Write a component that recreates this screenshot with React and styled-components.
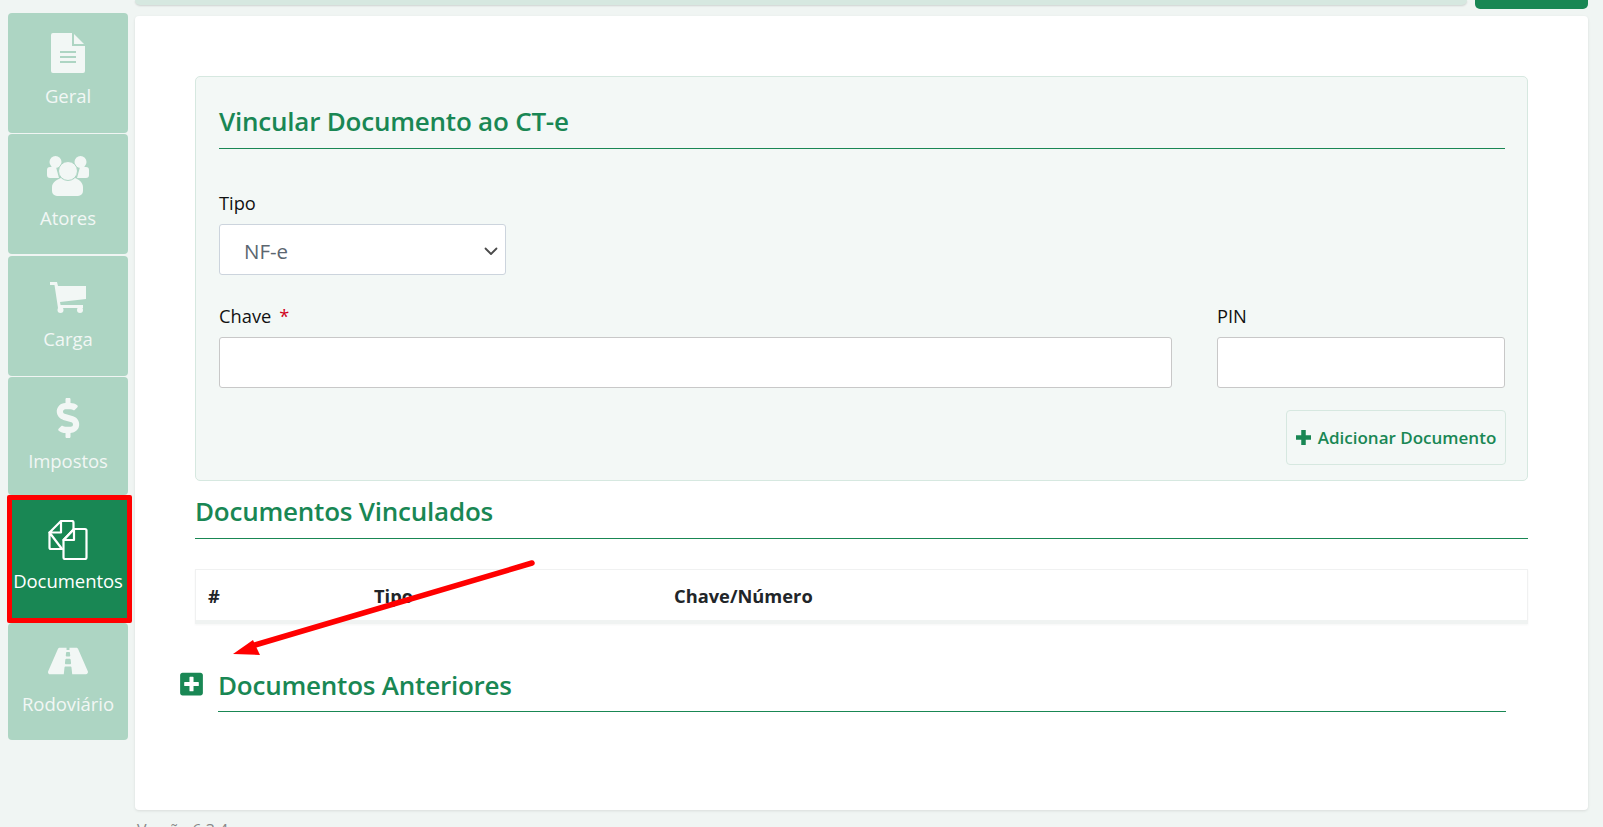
import React from 'react';
import styled, { createGlobalStyle } from 'styled-components';
import { FaDollarSign, FaRoad, FaPlusSquare } from 'react-icons/fa';

const GREEN = '#198754';
const FONT = '"Open Sans", "Noto Sans", "Liberation Sans", sans-serif';

const Global = createGlobalStyle`
  html, body { margin: 0; padding: 0; height: 827px; overflow: hidden; background: #f0f5f3; }
  body { font-family: ${FONT}; }
  * { box-sizing: border-box; }
`;

const Page = styled.div`
  position: relative;
  width: 1603px;
  height: 827px;
  overflow: hidden;
  display: flex;
  padding: 13px 15px 0 8px;
  gap: 7px;
  background: #f0f5f3;
`;

const Sidebar = styled.nav`
  width: 120px;
  flex: none;
  display: flex;
  flex-direction: column;
  gap: 1px;
`;

const Tab = styled.div`
  position: relative;
  z-index: ${p => (p.$active ? 1 : 0)};
  height: ${p => p.$h}px;
  margin: ${p => (p.$active ? '-1px 0' : `0 0 ${p.$mb || 0}px`)};
  flex: none;
  border-radius: 4px;
  background: ${p => (p.$active ? GREEN : '#add5c3')};
  color: ${p => (p.$active ? '#fff' : '#f2f7f5')};
  display: flex;
  flex-direction: column;
  align-items: center;
  padding-top: ${p => p.$pt}px;
`;

const ActiveOutline = styled.div`
  position: absolute;
  left: -1px;
  right: -4px;
  top: 0;
  bottom: 0;
  border: 5px solid #ff0000;
  border-radius: 2px;
  pointer-events: none;
`;

const IconSlot = styled.div`
  height: 44px;
  display: flex;
  align-items: center;
  justify-content: center;
`;

const TabLabel = styled.span`
  font-size: 18.5px;
  line-height: 24px;
  margin-top: ${p => p.$mt}px;
  letter-spacing: -0.05px;
  white-space: nowrap;
`;

const Main = styled.div`
  flex: 1;
  min-width: 0;
  display: flex;
  flex-direction: column;
  margin-top: -13px;
`;

const TopRow = styled.div`
  display: flex;
  gap: 8px;
  height: 16px;
  flex: none;
  align-items: flex-start;
`;

const TopBar = styled.div`
  flex: 1;
  height: 5px;
  background: #d6e8e0;
  border-radius: 0 0 5px 5px;
  box-shadow: 0 1px 2px rgba(0, 0, 0, 0.14);
`;

const TopButton = styled.div`
  width: 113px;
  height: 9px;
  background: ${GREEN};
  border-radius: 0 0 5px 5px;
`;

const Card = styled.main`
  height: 794px;
  flex: none;
  background: #fff;
  border-radius: 4px;
  box-shadow: 0 1px 3px rgba(0, 0, 0, 0.1);
  padding: 60px 60px 0 60px;
`;

const Panel = styled.section`
  height: 405px;
  background: #f3f8f6;
  border: 1px solid #d6e8e0;
  border-radius: 5px;
  padding: 23px 22px 0 23px;
`;

const Heading = styled.h2`
  margin: 0;
  font-size: 26px;
  line-height: 43px;
  height: ${p => p.$h || 49}px;
  font-weight: 600;
  color: ${GREEN};
  letter-spacing: -0.22px;
  border-bottom: 1px solid ${GREEN};
`;

const FieldRow = styled.div`
  display: flex;
  gap: 45px;
  margin-top: ${p => p.$mt}px;
`;

const Field = styled.div`
  width: ${p => p.$w};
  flex: ${p => (p.$grow ? 1 : 'none')};
`;

const Label = styled.label`
  display: block;
  font-size: 18.3px;
  line-height: 24px;
  color: #111;
  margin-bottom: 9px;
`;

const Req = styled.span`
  color: #d0021b;
  margin-left: 8px;
`;

const SelectBox = styled.div`
  height: 51px;
  border: 1px solid #ccd4dd;
  border-radius: 3px;
  background: #fff;
  display: flex;
  align-items: center;
  justify-content: space-between;
  padding: 3px 7px 0 24px;
  font-size: 20.5px;
  color: #5c6670;
`;

const TextBox = styled.div`
  height: 51px;
  border: 1px solid #c8c8c8;
  border-radius: 3px;
  background: #fff;
`;

const Actions = styled.div`
  display: flex;
  justify-content: flex-end;
  margin: 22px -1px 0 0;
`;

const AddButton = styled.button`
  width: 220px;
  height: 55px;
  border: 1px solid #d6e8e0;
  border-radius: 4px;
  background: #f3f8f6;
  color: ${GREEN};
  font-family: ${FONT};
  font-size: 17px;
  font-weight: 600;
  letter-spacing: 0;
  display: flex;
  align-items: center;
  justify-content: center;
  gap: 7px;
  padding: 0;
`;

const Section = styled.section`
  margin-top: ${p => p.$mt}px;
`;

const TableHead = styled.div`
  margin-top: 30px;
  height: 55px;
  border: 1px solid #f0f1f1;
  border-bottom: 4px solid #f0f3f2;
  box-shadow: 0 1px 2px rgba(0, 0, 0, 0.04);
  display: grid;
  grid-template-columns: 166px 300px 1fr;
  align-items: center;
  padding-left: 12px;
  font-size: 18.3px;
  font-weight: 700;
  color: #212529;
`;

const Collapse = styled.div`
  margin-top: 40px;
  margin-left: -15px;
  margin-right: 22px;
  display: flex;
  gap: 15px;
`;

const ToggleIcon = styled.span`
  color: ${GREEN};
  font-size: 26px;
  line-height: 0;
  margin-top: 7px;
  flex: none;
  width: 23px;
  display: flex;
  justify-content: center;
`;

const CollapseBody = styled.div`
  flex: 1;
`;

const Version = styled.div`
  margin: 9px 0 0 2px;
  font-size: 16px;
  line-height: 22px;
  color: #888;
`;

const Arrow = styled.svg`
  position: absolute;
  left: 0;
  top: 0;
  z-index: 2;
  pointer-events: none;
`;

const FileIcon = () => (
  <svg width="34" height="40" viewBox="0 0 34 40">
    <path fill="#f2f7f5" d="M2 0h19v13h13v25a2 2 0 0 1-2 2H2a2 2 0 0 1-2-2V2a2 2 0 0 1 2-2z" />
    <path fill="#f2f7f5" d="M23 1l10 10H23z" />
    <path stroke="#add5c3" strokeWidth="2" d="M9 19h16M9 24h16M9 29h16" />
  </svg>
);

const UsersIcon = () => (
  <svg width="42" height="40" viewBox="0 0 42 40" fill="#f2f7f5">
    <circle cx="8.500" cy="6" r="6" />
    <circle cx="33.500" cy="6" r="6" />
    <path d="M3 11h6l3 11H3a3 3 0 0 1-3-3v-5a3 3 0 0 1 3-3zM33 11h6a3 3 0 0 1 3 3v5a3 3 0 0 1-3 3h-9z" />
    <circle cx="21" cy="15" r="9.500" stroke="#add5c3" strokeWidth="1" />
    <path d="M14 22c4 4 10 4 14 0 3 1 8 4 8 9v4a5 5 0 0 1-5 5H10a5 5 0 0 1-5-5v-4c0-5 6-8 9-9z" />
  </svg>
);

const CartIcon = () => (
  <svg width="36" height="31" viewBox="0 0 36 31" fill="#f2f7f5">
    <path d="M0 0h7l1 4h28v13l-26 3 .6 3H33v3H8L4.500 3H0z" />
    <circle cx="10.500" cy="28" r="3" />
    <circle cx="30" cy="28" r="3" />
  </svg>
);

const DocsIcon = () => (
  <svg width="40" height="40" viewBox="0 0 40 40" fill="none" stroke="#fff" strokeWidth="2.200" strokeLinejoin="round">
    <path d="M13 1h11a1.500 1.500 0 0 1 1.500 1.500V9M14 29H3a1.500 1.500 0 0 1-1.500-1.500V12.500z" />
    <path d="M1.500 12.500L13 1v11.500z" />
    <path d="M26 9h11a1.500 1.500 0 0 1 1.500 1.500v27a1.500 1.500 0 0 1-1.500 1.500H17a1.500 1.500 0 0 1-1.500-1.500V20z" />
    <path d="M15.500 20L26 9v11z" />
  </svg>
);

const PlusIcon = () => (
  <svg width="15" height="15" viewBox="0 0 15 15">
    <path fill="none" stroke={GREEN} strokeWidth="4.500" d="M7.500 0v15M0 7.500h15" />
  </svg>
);

const Chevron = () => (
  <svg width="14" height="14" viewBox="0 0 14 14" fill="none" stroke="#4a4a4a" strokeWidth="1.800" strokeLinecap="round" strokeLinejoin="round">
    <path d="M1.500 4.500l5.500 5.500 5.500-5.500" />
  </svg>
);

const tabs = [
  { label: 'Geral', icon: <FileIcon />, pt: 18, mt: 9, h: 120 },
  { label: 'Atores', icon: <UsersIcon />, pt: 20, mt: 8, h: 120, mb: 1 },
  { label: 'Carga', icon: <CartIcon />, pt: 19, mt: 8, h: 120 },
  { label: 'Impostos', icon: <FaDollarSign size={40} />, pt: 19, mt: 9, h: 118 },
  { label: 'Documentos', icon: <DocsIcon />, pt: 23, mt: 7, h: 128, active: true },
  { label: 'Rodoviário', icon: <FaRoad size={40} />, pt: 16, mt: 9, h: 117 },
];

export default function App() {
  return (
    <Page>
      <Global />
      <Sidebar>
        {tabs.map(t => (
          <Tab key={t.label} $active={t.active} $pt={t.pt} $h={t.h} $mb={t.mb}>
            <IconSlot>{t.icon}</IconSlot>
            <TabLabel $mt={t.mt}>{t.label}</TabLabel>
            {t.active && <ActiveOutline />}
          </Tab>
        ))}
      </Sidebar>
      <Main>
        <TopRow>
          <TopBar />
          <TopButton />
        </TopRow>
        <Card>
          <Panel>
            <Heading>Vincular Documento ao CT-e</Heading>
            <FieldRow $mt={42}>
              <Field $w="287px">
                <Label>Tipo</Label>
                <SelectBox>
                  NF-e
                  <Chevron />
                </SelectBox>
              </Field>
            </FieldRow>
            <FieldRow $mt={29}>
              <Field $grow>
                <Label>Chave<Req>*</Req></Label>
                <TextBox />
              </Field>
              <Field $w="288px">
                <Label>PIN</Label>
                <TextBox />
              </Field>
            </FieldRow>
            <Actions>
              <AddButton><PlusIcon /> Adicionar Documento</AddButton>
            </Actions>
          </Panel>
          <Section $mt={9}>
            <Heading>Documentos Vinculados</Heading>
            <TableHead>
              <span>#</span>
              <span>Tipo</span>
              <span>Chave/Número</span>
            </TableHead>
          </Section>
          <Collapse>
            <ToggleIcon><FaPlusSquare /></ToggleIcon>
            <CollapseBody>
              <Heading $h={48}>Documentos Anteriores</Heading>
            </CollapseBody>
          </Collapse>
        </Card>
        <Version>Versão 6.3.4</Version>
      </Main>
      <Arrow width="1603" height="827" viewBox="0 0 1603 827">
        <path d="M532 563L255 645" stroke="#ff0000" strokeWidth="5.500" strokeLinecap="round" fill="none" />
        <path d="M233 654L253 640L260 655z" fill="#ff0000" />
      </Arrow>
    </Page>
  );
}
